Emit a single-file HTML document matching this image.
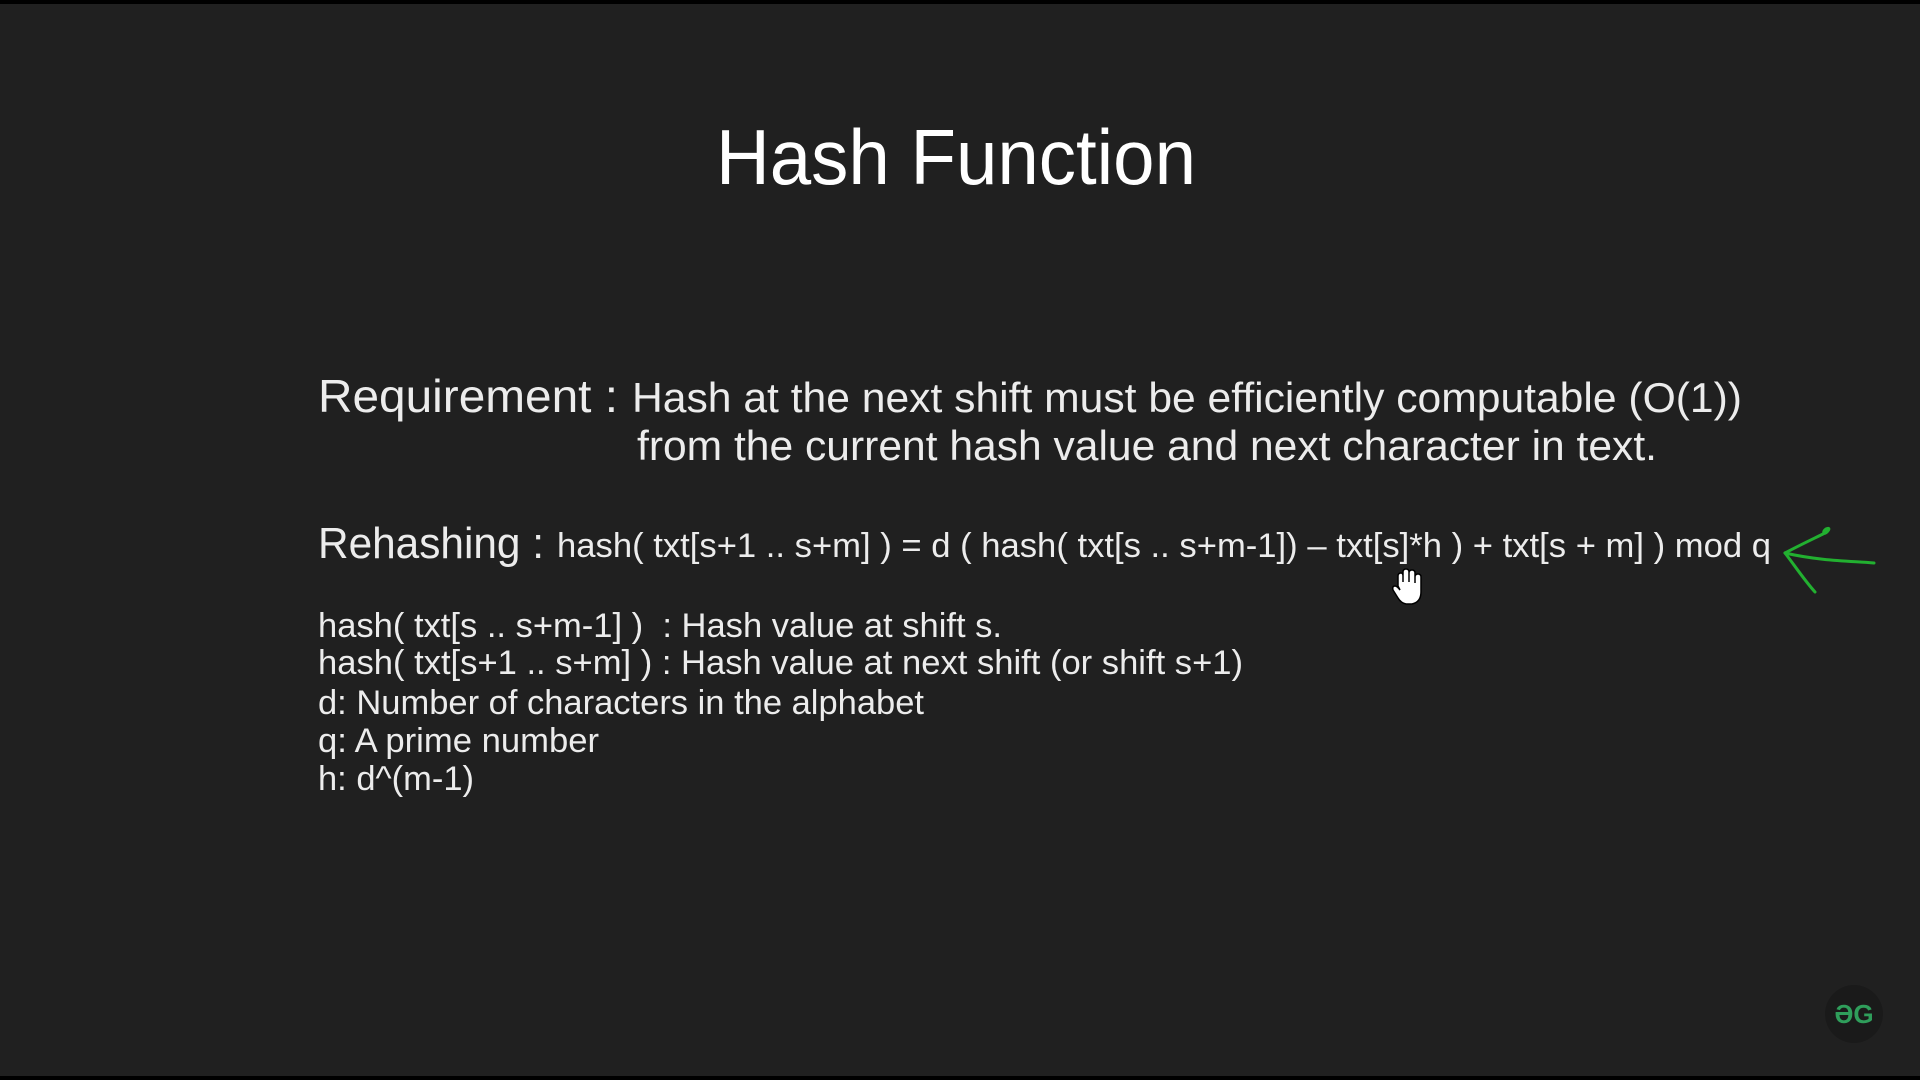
<!DOCTYPE html>
<html><head><meta charset="utf-8"><style>
html,body{margin:0;padding:0;background:#202020;}
svg{display:block}
text{font-family:"Liberation Sans",Arial,sans-serif}
</style></head><body>
<svg width="1920" height="1080" viewBox="0 0 1920 1080" xmlns="http://www.w3.org/2000/svg">
<rect width="1920" height="1080" fill="#202020"/>
<rect width="1920" height="4" fill="#000"/>
<rect y="1076" width="1920" height="4" fill="#000"/>
<g fill="#ececec">
<text x="716" y="184" font-size="78" textLength="480" lengthAdjust="spacingAndGlyphs" fill="#fff">Hash Function</text>
<text x="318" y="412" font-size="46" textLength="300" lengthAdjust="spacingAndGlyphs">Requirement :</text>
<text x="632" y="412" font-size="42" textLength="1110" lengthAdjust="spacingAndGlyphs">Hash at the next shift must be efficiently computable (O(1))</text>
<text x="637" y="460" font-size="42" textLength="1020" lengthAdjust="spacingAndGlyphs">from the current hash value and next character in text.</text>
<text x="318" y="558" font-size="44" textLength="226" lengthAdjust="spacingAndGlyphs">Rehashing :</text>
<text x="557" y="557" font-size="34" textLength="1214" lengthAdjust="spacingAndGlyphs">hash( txt[s+1 .. s+m] ) = d ( hash( txt[s .. s+m-1]) – txt[s]*h ) + txt[s + m] ) mod q</text>
<text x="318" y="637" font-size="34" textLength="684" lengthAdjust="spacingAndGlyphs" xml:space="preserve">hash( txt[s .. s+m-1] )  : Hash value at shift s.</text>
<text x="318" y="674" font-size="34" textLength="925" lengthAdjust="spacingAndGlyphs">hash( txt[s+1 .. s+m] ) : Hash value at next shift (or shift s+1)</text>
<text x="318" y="714" font-size="34" textLength="606" lengthAdjust="spacingAndGlyphs">d: Number of characters in the alphabet</text>
<text x="318" y="752" font-size="34" textLength="281" lengthAdjust="spacingAndGlyphs">q: A prime number</text>
<text x="318" y="790" font-size="34" textLength="156" lengthAdjust="spacingAndGlyphs">h: d^(m-1)</text>
</g>
<g stroke="#22b030" stroke-width="3" fill="none" stroke-linecap="round">
<path d="M1874 563 C1850 561 1820 561 1785 553"/>
<path d="M1785 553 C1800 545 1815 538 1825 533 C1830 530 1830 527 1826 529 C1822 532 1824 535 1827 532"/>
<path d="M1785 553 C1795 566 1805 581 1815 592"/>
</g>
<g transform="translate(1392,568)">
<path d="M6 18 L6 8 Q6 5 9 5 Q11 5 11 8 L11 14 L11 4 Q11 1 14 1 Q17 1 17 4 L17 14 L17 5 Q17 2 20 2 Q23 2 23 5 L23 15 L23 9 Q23 6 26 6 Q29 6 29 9 L29 24 Q29 34 20 36 L14 36 Q9 35 6 30 L1 22 Q0 18 3 18 Q5 18 8 22 Z" fill="#fff" stroke="#000" stroke-width="1.5"/>
</g>
<circle cx="1854" cy="1014" r="29" fill="#1a1a1a"/>
<text x="1854" y="1023" font-size="26" text-anchor="middle" style="fill:#2f9e5b" font-weight="bold">ƏG</text>
</svg>
</body></html>
